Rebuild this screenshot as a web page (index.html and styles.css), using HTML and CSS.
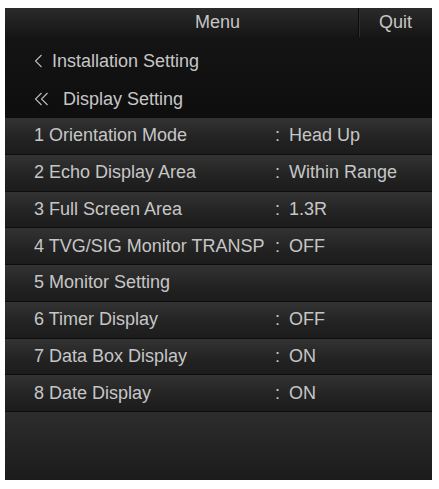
FILE: index.html
```html
<!DOCTYPE html>
<html>
<head>
<meta charset="utf-8">
<link rel="stylesheet" href="styles.css">
</head>
<body>
<div class="panel">
  <div class="header">
    <div class="title">Menu</div>
    <div class="quit">Quit</div>
  </div>
  <div class="nav">
    <div class="crumb">
      <svg class="chev" width="9" height="14" viewBox="0 0 9 14"><path d="M7.5 1 L1.5 7 L7.5 13" fill="none" stroke="#bdbdbd" stroke-width="1.1"/></svg>
      <span class="crumb-text">Installation Setting</span>
    </div>
    <div class="crumb">
      <svg class="chev2" width="15" height="14" viewBox="0 0 15 14"><path d="M7.5 1 L1.5 7 L7.5 13 M13.5 1 L7.5 7 L13.5 13" fill="none" stroke="#bdbdbd" stroke-width="1.1"/></svg>
      <span class="crumb-text">Display Setting</span>
    </div>
  </div>
  <div class="list">
    <div class="row"><span class="label">1 Orientation Mode</span><span class="colon">:</span><span class="value">Head Up</span></div>
    <div class="row"><span class="label">2 Echo Display Area</span><span class="colon">:</span><span class="value">Within Range</span></div>
    <div class="row"><span class="label">3 Full Screen Area</span><span class="colon">:</span><span class="value">1.3R</span></div>
    <div class="row"><span class="label">4 TVG/SIG Monitor TRANSP</span><span class="colon">:</span><span class="value">OFF</span></div>
    <div class="row"><span class="label">5 Monitor Setting</span></div>
    <div class="row"><span class="label">6 Timer Display</span><span class="colon">:</span><span class="value">OFF</span></div>
    <div class="row"><span class="label">7 Data Box Display</span><span class="colon">:</span><span class="value">ON</span></div>
    <div class="row"><span class="label">8 Date Display</span><span class="colon">:</span><span class="value">ON</span></div>
  </div>
  <div class="filler"></div>
</div>
</body>
</html>
```
FILE: styles.css
```css
html, body {
  margin: 0;
  padding: 0;
  background: #ffffff;
}
body {
  padding: 8px 0 0 5px;
  font-family: "Liberation Sans", Arial, sans-serif;
  font-size: 18px;
  color: #c6c6c6;
}
.panel {
  width: 427px;
  height: 472px;
  display: flex;
  flex-direction: column;
  background: #161616;
}
.header {
  height: 29px;
  display: flex;
  background: linear-gradient(#2b2b2b, #151515);
}
.title {
  flex: 1;
  text-align: center;
  line-height: 29px;
  padding-left: 72px;
}
.quit {
  width: 74px;
  border-left: 1px solid #0c0c0c;
  box-shadow: inset 1px 0 0 #2e2e2e;
  line-height: 29px;
  padding-left: 20px;
  box-sizing: border-box;
}
.nav {
  height: 80px;
  padding-top: 5px;
  box-sizing: border-box;
  background: linear-gradient(#141414, #0e0e0e);
}
.crumb {
  height: 38px;
  padding-left: 29px;
  display: flex;
  align-items: center;
}
.chev {
  margin-right: 9px;
}
.chev2 {
  margin-right: 14px;
}
.list {
  display: flex;
  flex-direction: column;
}
.row {
  height: 36.75px;
  box-sizing: border-box;
  display: flex;
  align-items: center;
  padding-left: 29px;
  border-top: 1px solid #0d0d0d;
  background: linear-gradient(#333333, #222222 60%, #1c1c1c);
}
.label {
  width: 241px;
}
.colon {
  width: 14px;
}
.filler {
  flex: 1;
  border-top: 1px solid #0d0d0d;
  background: linear-gradient(#2d2d2d, #1b1b1b);
}
```
